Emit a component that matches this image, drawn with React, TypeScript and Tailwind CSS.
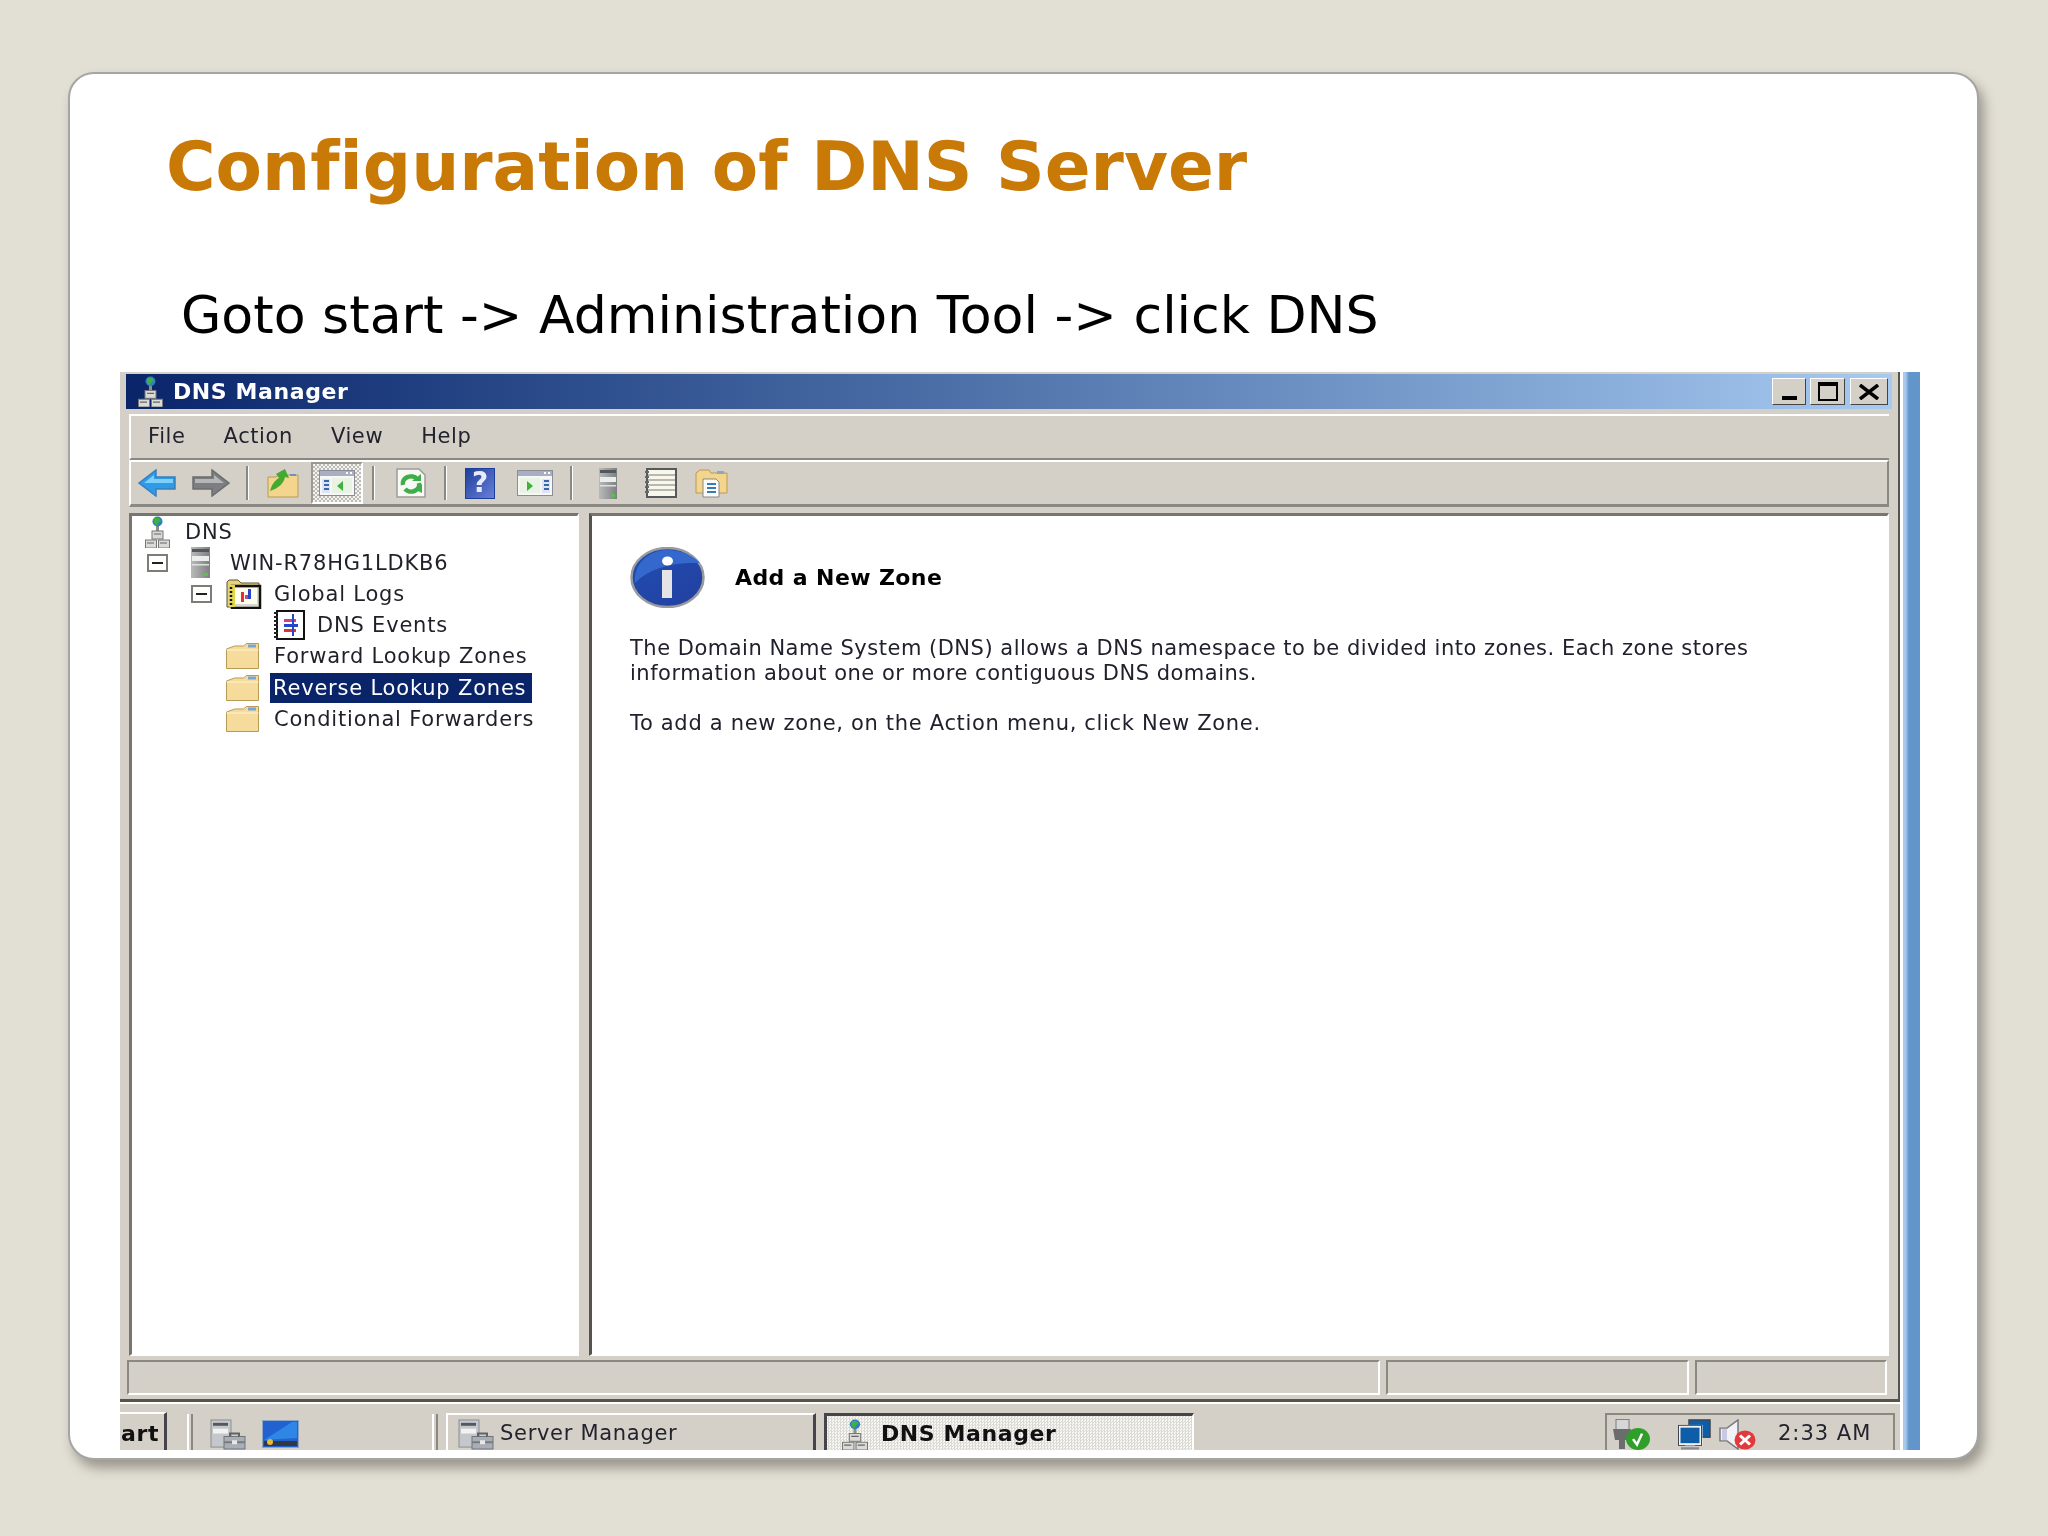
import type { ReactNode } from 'react'

const UI_FONT = "font-['DejaVu_Sans',sans-serif]"

function DnsIcon({ className = '' }: { className?: string }) {
  return (
    <svg viewBox="0 0 25 32" preserveAspectRatio="none" className={className}>
      <rect x="11" y="8" width="3" height="8" fill="#8a8f8a" />
      <circle cx="12.5" cy="5.5" r="5" fill="#2f7fc4" />
      <path d="M9 2h5l2 3-3 2-1 3-3-3z" fill="#3fae49" />
      <rect x="7" y="15" width="11" height="8" fill="#d9dbd6" stroke="#777" />
      <rect x="0.5" y="24" width="11" height="8" fill="#d9dbd6" stroke="#777" />
      <rect x="13.5" y="24" width="11" height="8" fill="#d9dbd6" stroke="#777" />
      <path d="M9 18h7M2 27h7M15 27h7" stroke="#666" strokeWidth="1.2" />
    </svg>
  )
}

function ServerTower({ className = '' }: { className?: string }) {
  return (
    <svg viewBox="0 0 19 31" preserveAspectRatio="none" className={className}>
      <defs>
        <linearGradient id="tower" x1="0" x2="1" y1="0" y2="0">
          <stop offset="0" stopColor="#b8bab8" />
          <stop offset="1" stopColor="#7d8083" />
        </linearGradient>
      </defs>
      <rect width="19" height="31" fill="url(#tower)" />
      <rect x="1" y="2" width="17" height="3" fill="#55585b" />
      <rect x="1" y="9" width="17" height="5" fill="#eceeec" />
      <rect x="1" y="17" width="17" height="1.5" fill="#e0e0e0" />
      <rect x="13" y="26" width="4" height="3" fill="#57c443" />
    </svg>
  )
}

function MinusBox() {
  return (
    <span className="flex h-[18px] w-[21px] items-center justify-center border-2 border-[#7d7d78] bg-white">
      <span className="h-[2px] w-[11px] bg-[#222]" />
    </span>
  )
}

function LogFolder({ className = '' }: { className?: string }) {
  return (
    <svg viewBox="0 0 36 30" className={className}>
      <path d="M1 3l2-2h9l3 3h18v24H1z" fill="#e9d27c" stroke="#5b5330" />
      <rect x="6" y="7" width="28" height="22" fill="#d8d8d0" stroke="#111" strokeWidth="2.5" />
      <rect x="9" y="9" width="22" height="16" fill="#fffdf0" />
      <rect x="3" y="6" width="6" height="22" fill="#e0d84a" />
      <path d="M5 8v2M5 12v2M5 16v2M5 20v2M5 24v2" stroke="#111" strokeWidth="2.5" />
      <rect x="15" y="13" width="3" height="10" fill="#d33" />
      <rect x="22" y="10" width="3" height="10" fill="#2546c8" />
      <rect x="19" y="16" width="3" height="4" fill="#c7448a" />
    </svg>
  )
}

function LogBook({ className = '' }: { className?: string }) {
  return (
    <svg viewBox="0 0 32 30" className={className}>
      <rect x="4" y="1" width="27" height="28" fill="#fff" stroke="#111" strokeWidth="2" />
      <path d="M3 2v2M3 6v2M3 10v2M3 14v2M3 18v2M3 22v2M3 26v2" stroke="#222" strokeWidth="4" />
      <rect x="11" y="9" width="12" height="3" fill="#c7448a" />
      <rect x="11" y="14" width="14" height="3" fill="#2546c8" />
      <rect x="11" y="19" width="12" height="3" fill="#d33" />
      <rect x="19" y="4" width="2" height="22" fill="#2546c8" />
    </svg>
  )
}

function Folder({ className = '' }: { className?: string }) {
  return (
    <svg viewBox="0 0 33 26" preserveAspectRatio="none" className={className}>
      <path d="M0.5 25.5V6l8-3h9l3-2.5h12v25z" fill="#f6dc9c" stroke="#b89a55" />
      <path d="M0.5 7h32" stroke="#fff3d0" />
      <rect x="22" y="1.5" width="8" height="3" fill="#7aa4d8" />
    </svg>
  )
}

function Arrow({ flip = false, color }: { flip?: boolean; color: [string, string, string] }) {
  return (
    <svg viewBox="0 0 38 28" className={`h-[28px] w-[38px] ${flip ? '-scale-x-100' : ''}`}>
      <path d="M37 14 20 1v7H1v12h19v7z" fill={color[0]} stroke={color[2]} strokeWidth="1.5" />
      <path d="M3 10h19v-4l10 8H3z" fill={color[1]} />
    </svg>
  )
}

function UpFolder({ className = '' }: { className?: string }) {
  return (
    <svg viewBox="0 0 32 30" className={className}>
      <path d="M1 29V9h8l3-2h19v22z" fill="#f3d58e" stroke="#b89a55" />
      <path d="M3 23c2-7 5-11 9-13l-3-4 9-5 4 9-4-1c-1 6-6 11-15 14z" fill="#45a92f" />
      <rect x="23" y="6" width="6" height="2" fill="#6b93c7" />
    </svg>
  )
}

function PaneIcon({ reverse = false, className = '' }: { reverse?: boolean; className?: string }) {
  return (
    <svg viewBox="0 0 36 26" className={className}>
      <rect x="0.5" y="0.5" width="35" height="25" fill="#f7f7f7" stroke="#8a8d96" />
      <rect x="1" y="1" width="34" height="5" fill="#a9afc2" />
      <rect x="27" y="2" width="2" height="2" fill="#fff" />
      <rect x="31" y="2" width="2" height="2" fill="#fff" />
      <rect x={reverse ? 25 : 3} y="9" width="8" height="14" fill="#dde4f4" />
      <path d={reverse ? 'M27 11h5M27 15h5M27 19h5' : 'M5 11h5M5 15h5M5 19h5'} stroke="#3a66b0" strokeWidth="2" />
      <rect x={reverse ? 3 : 13} y="8" width="20" height="15" fill="#e9f3e4" />
      <path d={reverse ? 'M10 11l6 5-6 5z' : 'M24 11l-6 5 6 5z'} fill="#3fb13a" />
    </svg>
  )
}

function RefreshDoc({ className = '' }: { className?: string }) {
  return (
    <svg viewBox="0 0 30 30" className={className}>
      <path d="M1 1h22l6 6v22H1z" fill="#f9f9f6" stroke="#9c9c98" strokeWidth="1.5" />
      <path d="M7 17a8 7 0 0 1 14-6M23 15a8 7 0 0 1-14 6" fill="none" stroke="#3fae49" strokeWidth="4.5" />
      <path d="M16 13h9V6zM18 21l8 4v-9z" fill="#3fae49" />
    </svg>
  )
}

function HelpIcon({ className = '' }: { className?: string }) {
  return (
    <span className={`flex items-center justify-center border border-[#1d3f9c] bg-gradient-to-br from-[#1d3f9c] to-[#6a80d8] text-[28px] font-bold leading-none text-[#e7ebf7] ${className}`}>
      ?
    </span>
  )
}

function FolderDoc({ className = '' }: { className?: string }) {
  return (
    <svg viewBox="0 0 33 30" className={className}>
      <path d="M1 25V5l4-3h9l2 3h16v20z" fill="#f3d58e" stroke="#b89a55" />
      <rect x="22" y="3" width="7" height="3" fill="#8aa6c8" />
      <path d="M8 11h13l3 3v15H8z" fill="#fbfbf8" stroke="#888" />
      <path d="M12 16h9M12 20h9M12 24h9" stroke="#3a7ab8" strokeWidth="2" />
    </svg>
  )
}

function ListIcon({ className = '' }: { className?: string }) {
  return (
    <svg viewBox="0 0 33 30" className={className}>
      <rect x="3" y="1" width="29" height="28" fill="#f7f7ec" stroke="#55595c" strokeWidth="2" />
      <path d="M4 7h27M4 12h27M4 17h27M4 22h27" stroke="#a4a49c" strokeWidth="1.5" />
      <path d="M1 4h4M1 9h4M1 14h4M1 19h4M1 24h4" stroke="#666" strokeWidth="2" />
    </svg>
  )
}

function ServerManagerIcon({ className = '' }: { className?: string }) {
  return (
    <svg viewBox="0 0 36 32" preserveAspectRatio="none" className={className}>
      <rect x="1" y="1" width="20" height="28" fill="#c4c7cb" stroke="#8a8e92" />
      <rect x="3" y="4" width="15" height="3" fill="#55585b" />
      <rect x="3" y="10" width="15" height="5" fill="#f2f2f0" />
      <rect x="14" y="18" width="21" height="13" fill="#a9aeb5" stroke="#6f7378" />
      <path d="M20 18v-3h9v3" fill="none" stroke="#5f6368" strokeWidth="2" />
      <rect x="14" y="23" width="21" height="2" fill="#777b80" />
      <rect x="22" y="22" width="5" height="4" fill="#e9e9e9" />
    </svg>
  )
}

function DesktopIcon({ className = '' }: { className?: string }) {
  return (
    <svg viewBox="0 0 37 28" className={className}>
      <rect x="0.5" y="0.5" width="36" height="27" fill="#2063d0" stroke="#90a4c4" />
      <path d="M2 20 30 2h5v16z" fill="#2f86e4" />
      <rect x="2" y="21" width="33" height="5" fill="#34383e" />
      <circle cx="8" cy="22" r="3" fill="#e8b93a" />
    </svg>
  )
}

function UsbCheck({ className = '' }: { className?: string }) {
  return (
    <svg viewBox="0 0 38 34" preserveAspectRatio="none" className={className}>
      <rect x="4" y="0.5" width="13" height="11" fill="#d6d6d6" stroke="#7a7a7a" />
      <path d="M1 11h18l-2 12h-4v10H7V23H3z" fill="#6a6c6e" />
      <circle cx="26" cy="22" r="12" fill="#2f9f2a" />
      <path d="m21 22 4 6 5-12" fill="none" stroke="#fff" strokeWidth="2.5" />
    </svg>
  )
}

function NetworkIcon({ className = '' }: { className?: string }) {
  return (
    <svg viewBox="0 0 33 34" preserveAspectRatio="none" className={className}>
      <rect x="11" y="1" width="21" height="19" fill="#0d5da8" stroke="#40464c" strokeWidth="1.5" />
      <rect x="1" y="8" width="22" height="20" fill="#0d5da8" stroke="#f2f2f2" strokeWidth="3" />
      <rect x="0.5" y="7" width="23" height="22" fill="none" stroke="#40464c" />
      <rect x="7" y="29" width="10" height="2" fill="#c9c9c9" />
      <rect x="3" y="31" width="18" height="2.5" fill="#8a8a8a" />
    </svg>
  )
}

function SpeakerMute({ className = '' }: { className?: string }) {
  return (
    <svg viewBox="0 0 37 34" preserveAspectRatio="none" className={className}>
      <path d="M1 10h7L19 1v32L8 24H1z" fill="#f2f2f6" stroke="#77777f" strokeWidth="1.5" />
      <rect x="3" y="11" width="5" height="12" fill="#c9c9e6" />
      <circle cx="26" cy="23" r="10.5" fill="#e23a3a" />
      <path d="m21 18 10 10M31 18 21 28" stroke="#fff" strokeWidth="3" />
    </svg>
  )
}

function InfoIcon({ className = '' }: { className?: string }) {
  return (
    <svg viewBox="0 0 75 61" className={className}>
      <defs>
        <linearGradient id="infoBlue" x1="0" x2="1" y1="0" y2="1">
          <stop offset="0" stopColor="#1f4db0" />
          <stop offset="1" stopColor="#2440a0" />
        </linearGradient>
      </defs>
      <ellipse cx="37.5" cy="30.5" rx="36" ry="29.5" fill="url(#infoBlue)" stroke="#9a9a9f" strokeWidth="2.5" />
      <path d="M5 36C18 22 40 15 70 16 60 6 48 3 37 3 18 3 3 18 5 36z" fill="#3568cc" />
      <ellipse cx="37.5" cy="14" rx="5.5" ry="4.5" fill="#fff" />
      <rect x="32" y="23" width="10" height="28" fill="#e4e4e4" />
    </svg>
  )
}

function ToolbarSep({ className = '' }: { className?: string }) {
  return <span className={`h-[34px] w-[3px] border-l-2 border-[#8a8882] bg-white ${className}`} />
}

function TreeRow({ indent, selected, icon, label, gap }: { indent: string; selected?: boolean; icon: ReactNode; label: string; gap: string }) {
  return (
    <div className={`flex h-[31.2px] items-center ${indent}`}>
      {icon}
      <span className={`whitespace-nowrap pl-[3px] text-[21px] leading-[30px] tracking-[0.8px] ${gap} ${selected ? 'bg-[#0a246a] pr-[6px] text-white' : 'pr-[3px] text-[#1f2028]'}`}>{label}</span>
    </div>
  )
}

function StatusCell({ className }: { className: string }) {
  return <div className={`h-[35px] border-2 border-b-white border-l-[#8a8882] border-r-white border-t-[#8a8882] ${className}`} />
}

export default function App() {
  return (
    <div className="h-[1536px] w-[2048px] overflow-hidden bg-[#e2dfd4] pl-[68px] pt-[72px]">
      <div className="flex h-[1388px] w-[1911px] flex-col rounded-[26px] border-2 border-[#a5a5a3] bg-white shadow-[5px_8px_12px_rgba(70,65,55,0.45)]">
        <h1 className="ml-[96px] mt-[53px] whitespace-nowrap font-['DejaVu_Sans',sans-serif] text-[67.6px] font-bold leading-[80px] text-[#c97a06] [font-variant-ligatures:none]">
          Configuration of DNS Server
        </h1>
        <p className="ml-[111px] mt-[78px] whitespace-nowrap font-['DejaVu_Sans',sans-serif] text-[52.1px] leading-[60px] text-black">
          Goto start -&gt; Administration Tool -&gt; click DNS
        </p>

        {/* the pasted Windows screenshot */}
        <div className={`ml-[50px] mt-[27px] flex h-[1078px] w-[1800px] blur-[0.6px] ${UI_FONT}`}>
          <div className="flex w-[1780px] flex-col">
            <div className="flex h-[1030px] flex-col border-b-[3px] border-r-[2px] border-b-[#55554f] border-r-[#55554f] bg-[#d4d0c8] pl-[6px] pr-[6px] pt-[2px]">
              <div className="flex h-[35px] w-[1766px] shrink-0 items-center bg-gradient-to-r from-[#0a246a] to-[#a6caf0] pl-[12px] pr-[4px]">
                <DnsIcon className="h-[31px] w-[25px]" />
                <span className="ml-[10px] text-[22px] font-bold tracking-[0.6px] text-white">DNS Manager</span>
                <div className="ml-auto flex items-center">
                  <button className="flex h-[27px] w-[34px] items-end justify-center border border-b-[#444] border-l-white border-r-[#444] border-t-white bg-[#d4d0c8] pb-[4px]">
                    <span className="h-[4px] w-[15px] bg-black" />
                  </button>
                  <button className="ml-[4px] flex h-[27px] w-[35px] items-center justify-center border border-b-[#444] border-l-white border-r-[#444] border-t-white bg-[#d4d0c8]">
                    <span className="h-[19px] w-[20px] border-2 border-t-4 border-black" />
                  </button>
                  <button className="ml-[5px] flex h-[27px] w-[38px] items-center justify-center border border-b-[#444] border-l-white border-r-[#444] border-t-white bg-[#d4d0c8]">
                    <svg viewBox="0 0 20 16" className="h-[16px] w-[20px]"><path d="M1 1l18 14M19 1 1 15" stroke="#000" strokeWidth="3.5" /></svg>
                  </button>
                </div>
              </div>

              <div className="ml-[3px] mt-[5px] flex h-[46px] w-[1760px] shrink-0 items-center border-b-2 border-l-2 border-t-2 border-b-[#8a8882] border-l-white border-t-white text-[21px] tracking-[0.6px] text-[#22232c]">
                <span className="ml-[17px]">File</span>
                <span className="ml-[38px]">Action</span>
                <span className="ml-[38px]">View</span>
                <span className="ml-[38px]">Help</span>
              </div>

              <div className="ml-[3px] flex h-[47px] w-[1760px] shrink-0 items-center border-b-[3px] border-l-2 border-r-2 border-t-2 border-b-[#8a8882] border-l-white border-r-[#8a8882] border-t-white">
                <span className="ml-[7px]"><Arrow flip color={['#2d9be6', '#7fd0f8', '#3a7fc0']} /></span>
                <span className="ml-[16px]"><Arrow color={['#7c7e80', '#b4b6b8', '#6a6c6e']} /></span>
                <ToolbarSep className="ml-[16px]" />
                <UpFolder className="ml-[18px] h-[30px] w-[32px]" />
                <span className="ml-[12px] flex h-[42px] w-[52px] items-center justify-center border-2 border-b-white border-l-[#9a9a94] border-r-white border-t-[#9a9a94] bg-[repeating-conic-gradient(#bdbbb5_0_25%,#f4f3ef_0_50%)] bg-[length:4px_4px]">
                  <PaneIcon className="h-[26px] w-[36px]" />
                </span>
                <ToolbarSep className="ml-[9px]" />
                <RefreshDoc className="ml-[21px] h-[30px] w-[30px]" />
                <ToolbarSep className="ml-[18px]" />
                <HelpIcon className="ml-[18px] h-[31px] w-[30px]" />
                <PaneIcon reverse className="ml-[22px] h-[26px] w-[36px]" />
                <ToolbarSep className="ml-[17px]" />
                <ServerTower className="ml-[26px] h-[31px] w-[18px]" />
                <ListIcon className="ml-[27px] h-[30px] w-[33px]" />
                <FolderDoc className="ml-[18px] h-[30px] w-[33px]" />
              </div>

              <div className="mt-[6px] flex min-h-0 flex-1 pl-[3px]">
                <div className="w-[450px] overflow-hidden border-b-2 border-l-[3px] border-r-2 border-t-[3px] border-b-white border-l-[#77756f] border-r-white border-t-[#77756f] bg-white">
                  <TreeRow indent="pl-[13px]" icon={<DnsIcon className="h-[32px] w-[25px]" />} gap="ml-[12px]" label="DNS" />
                  <TreeRow indent="pl-[15px]" icon={<><MinusBox /><ServerTower className="ml-[23px] h-[31px] w-[19px]" /></>} gap="ml-[17px]" label="WIN-R78HG1LDKB6" />
                  <TreeRow indent="pl-[59px]" icon={<><MinusBox /><LogFolder className="ml-[14px] h-[30px] w-[36px]" /></>} gap="ml-[9px]" label="Global Logs" />
                  <TreeRow indent="pl-[141px]" icon={<LogBook className="h-[30px] w-[32px]" />} gap="ml-[9px]" label="DNS Events" />
                  <TreeRow indent="pl-[94px]" icon={<Folder className="h-[26px] w-[33px]" />} gap="ml-[12px]" label="Forward Lookup Zones" />
                  <TreeRow indent="pl-[94px]" selected icon={<Folder className="h-[26px] w-[33px]" />} gap="ml-[11px]" label="Reverse Lookup Zones" />
                  <TreeRow indent="pl-[94px]" icon={<Folder className="h-[26px] w-[33px]" />} gap="ml-[12px]" label="Conditional Forwarders" />
                </div>
                <div className="ml-[10px] w-[1300px] border-b-2 border-l-[3px] border-r-2 border-t-[3px] border-b-white border-l-[#55554f] border-r-white border-t-[#77756f] bg-white pl-[38px] pt-[31px] text-[#20212c]">
                  <div className="flex items-center">
                    <InfoIcon className="h-[61px] w-[75px]" />
                    <span className="ml-[30px] text-[22px] font-bold tracking-[0.4px] text-black">Add a New Zone</span>
                  </div>
                  <p className="mt-[28px] w-[1200px] text-[21px] leading-[25px] tracking-[0.5px]">
                    The Domain Name System (DNS) allows a DNS namespace to be divided into zones. Each zone stores information about one or more contiguous DNS domains.
                  </p>
                  <p className="mt-[25px] text-[21px] leading-[25px] tracking-[0.68px]">To add a new zone, on the Action menu, click New Zone.</p>
                </div>
              </div>

              <div className="mb-[4px] ml-[1px] mt-[4px] flex shrink-0 gap-[6px]">
                <StatusCell className="w-[1253px]" />
                <StatusCell className="w-[303px]" />
                <StatusCell className="w-[192px]" />
              </div>
            </div>

            <div className="flex h-[48px] items-end overflow-hidden border-t-2 border-white bg-[#d4d0c8] text-[21px] text-[#22232c]">
              <span className="flex h-[38px] w-[47px] shrink-0 items-center justify-end border-r-[3px] border-t-2 border-r-[#44444a] border-t-white pr-[5px] pt-[3px] text-[22px] font-bold tracking-[0.6px] text-[#111]">art</span>
              <span className="ml-[20px] h-[36px] w-[6px] shrink-0 border-x-2 border-l-white border-r-[#8a8882]" />
              <ServerManagerIcon className="ml-[17px] h-[31px] w-[36px] shrink-0" />
              <DesktopIcon className="mb-[2px] ml-[16px] h-[28px] w-[37px] shrink-0" />
              <span className="ml-[133px] h-[36px] w-[6px] shrink-0 border-x-2 border-l-white border-r-[#8a8882]" />
              <div className="ml-[8px] flex h-[37px] w-[370px] shrink-0 items-end border-l-2 border-r-[3px] border-t-2 border-l-white border-r-[#44444a] border-t-white pl-[10px]">
                <ServerManagerIcon className="h-[31px] w-[36px]" />
                <span className="mb-[1px] ml-[6px] tracking-[0.7px]">Server Manager</span>
              </div>
              <div className="ml-[8px] flex h-[37px] w-[370px] shrink-0 items-end border-l-[3px] border-r-2 border-t-[3px] border-l-[#44444a] border-r-white border-t-[#44444a] bg-[repeating-conic-gradient(#dcdad4_0_25%,#f8f7f4_0_50%)] bg-[length:3px_3px] pl-[15px]">
                <DnsIcon className="h-[31px] w-[26px]" />
                <span className="ml-[13px] text-[22px] font-bold tracking-[0.6px] text-[#111]">DNS Manager</span>
              </div>
              <div className="ml-auto mr-[5px] flex h-[37px] w-[290px] shrink-0 items-end border-l-2 border-r-2 border-t-2 border-[#8a8882] pl-[5px]">
                <UsbCheck className="h-[31px] w-[38px]" />
                <NetworkIcon className="ml-[28px] h-[31px] w-[33px]" />
                <SpeakerMute className="ml-[8px] h-[31px] w-[37px]" />
                <span className="mb-[1px] ml-[22px] tracking-[1px]">2:33 AM</span>
              </div>
            </div>
          </div>
          <div className="ml-[3px] h-full w-[17px] bg-gradient-to-r from-[#a9c8ea] from-[15%] to-[#6296cb] to-[35%]" />
        </div>
      </div>
    </div>
  )
}
